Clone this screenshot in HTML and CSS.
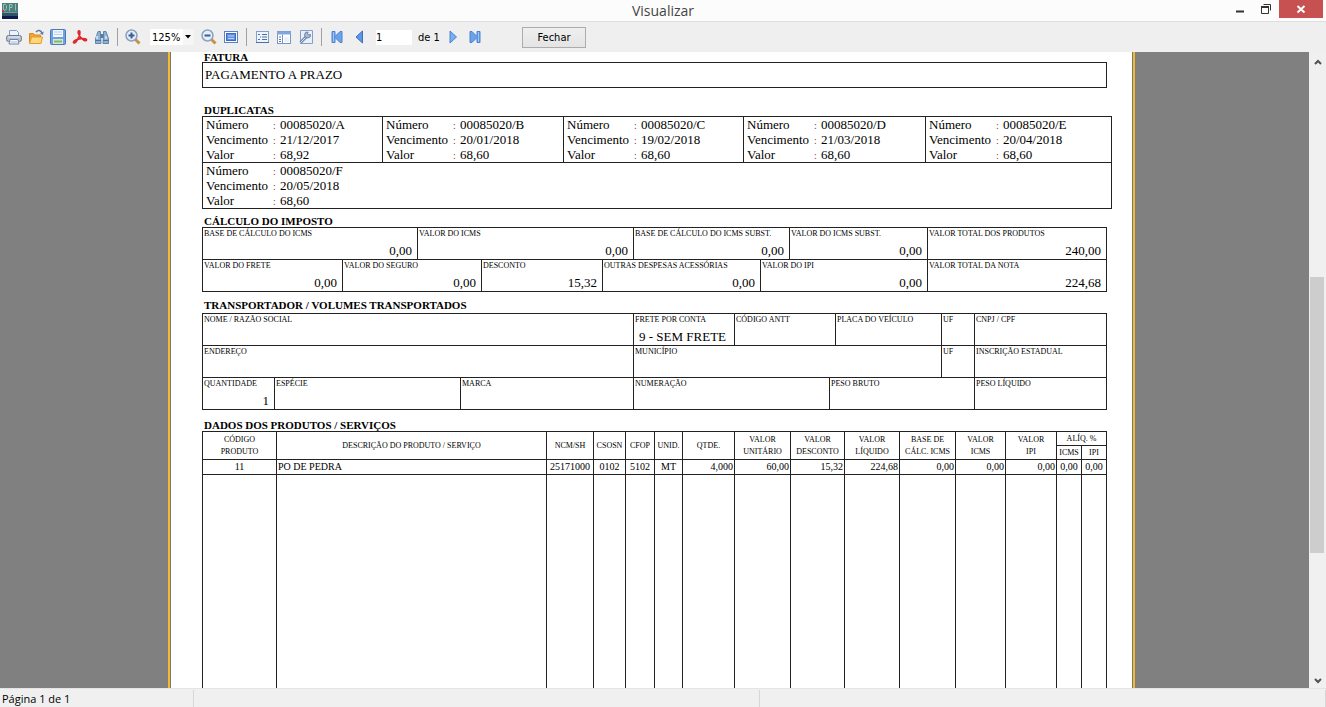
FILE: index.html
```html
<!DOCTYPE html>
<html lang="pt-BR">
<head>
    <meta charset="UTF-8">
    <meta name="viewport" content="width=device-width, initial-scale=1.0">
    <title>Visualizar</title>
    <link rel="stylesheet" href="styles.css">
</head>
<body>
    <header class="titlebar">
        <svg class="app-icon" width="16" height="16" viewBox="0 0 16 16">
            <rect width="16" height="16" fill="#4e7f7c"/>
            <rect y="10" width="16" height="3" fill="#2f5468"/>
            <rect y="13" width="16" height="3" fill="#0d1c4a"/>
            <path d="M1.500 7.500v-6h2l1 1v3l-1 1.500zM7.500 8V1.500h2.500v3H7.500M13.500 1v6.500" fill="none" stroke="#8fc4b4"/>
            <rect y="7" width="2" height="2" fill="#d0304a"/>
            <path d="M2 9.500h13" stroke="#7798a4"/>
        </svg>
        <h1>Visualizar</h1>
        <div class="window-buttons">
            <button class="win" aria-label="Minimizar"><svg width="12" height="12" viewBox="0 0 12 12"><path d="M2 8.500h8" stroke="#333" stroke-width="2"/></svg></button>
            <button class="win" aria-label="Restaurar"><svg width="12" height="12" viewBox="0 0 12 12"><path d="M1.500 4h7v6.500h-7z" fill="none" stroke="#333"/><path d="M1 4h8" stroke="#333" stroke-width="2"/><path d="M3.500 1.500h7v6" fill="none" stroke="#333"/></svg></button>
            <button class="win close" aria-label="Fechar janela"><svg width="10" height="10" viewBox="0 0 10 10"><path d="M1.500 2l7 6.500M8.500 2l-7 6.500" stroke="#fff" stroke-width="2"/></svg></button>
        </div>
    </header>

    <div class="toolbar">
        <button class="tool" aria-label="Imprimir">
            <svg viewBox="0 0 16 16"><path d="M3.500 7V1.500h7l2 2V7z" fill="#eaf3ff" stroke="#7e9cc4"/><rect x=".5" y="6.500" width="15" height="6" rx="2" fill="#b8c0cc" stroke="#6f7a8c"/><path d="M2 8h12" stroke="#eef1f5"/><path d="M4 10.500h8l1 4.500H3z" fill="#f4f8ff" stroke="#6e88ad"/><path d="M4.500 13h7" stroke="#9cc0ea"/></svg>
        </button>
        <button class="tool" aria-label="Abrir">
            <svg viewBox="0 0 16 16"><path d="M1.500 14V4.500h4l1 1.500h6v8z" fill="#eda63a" stroke="#d98a24"/><path d="M1.500 14.500l2-6.500h11l-1.500 6.500z" fill="#ffd77a" stroke="#e39a2e"/><path d="M8 3c2-2.500 5-2 6 1" fill="none" stroke="#5a7ca8" stroke-width="1.500"/><path d="M15.700 2.500l-.7 3.500-3-1.500z" fill="#5a7ca8"/></svg>
        </button>
        <button class="tool" aria-label="Salvar">
            <svg viewBox="0 0 16 16"><rect x=".5" y=".5" width="15" height="15" rx="1" fill="#6fa2e2" stroke="#4a78bd"/><rect x="3" y="1" width="10" height="7" fill="#f3f8ff"/><path d="M4 3h8M4 5.500h8" stroke="#b7cde9"/><rect x="3" y="10" width="10" height="5" fill="#d7e7cf"/><path d="M4 12.500h8" stroke="#82ba6c" stroke-width="2"/></svg>
        </button>
        <button class="tool" aria-label="Exportar PDF">
            <svg viewBox="0 0 16 16"><path d="M6.500 2C8.500 1 8 5 7 7.500 5.500 11 3 15 1.700 13.700.5 12 5 10 9 9.700c3-.2 6 .3 5.500 1.500-.7 1.500-4-.5-6-3C7 6 5.500 3 6.500 2z" fill="none" stroke="#e0262b" stroke-width="1.700"/></svg>
        </button>
        <button class="tool" aria-label="Localizar">
            <svg viewBox="0 0 16 16"><path d="M4 2.500h2.500V6l.5 8.500H1.500V10zM9.500 2.500H12l2.500 7.500v4.500H9L9.500 6z" fill="#8eb2d5" stroke="#6485a8"/><path d="M6.500 5h3v4h-3z" fill="#567da8"/><path d="M3 7v3M12 7v3" stroke="#dcecff" stroke-width="1.500"/><path d="M1.500 11.500H7M9 11.500h5.500" stroke="#4f7396"/></svg>
        </button>
        <span class="sep"></span>
        <button class="tool" aria-label="Aumentar zoom">
            <svg viewBox="0 0 16 16"><path d="M10 10l4.500 4.500" stroke="#c99242" stroke-width="3"/><circle cx="6.500" cy="6.500" r="5.500" fill="#e4effb" stroke="#8ba1bd" stroke-width="1.500"/><path d="M3.500 6.500h6M6.500 3.500v6" stroke="#385d94" stroke-width="2"/></svg>
        </button>
        <div class="zoom">
            <select aria-label="Zoom"><option>125%</option></select>
            <svg width="6" height="4" viewBox="0 0 6 4"><path d="M0 0h6L3 3.500z"/></svg>
        </div>
        <button class="tool" aria-label="Diminuir zoom">
            <svg viewBox="0 0 16 16"><path d="M10 10l4.500 4.500" stroke="#c99242" stroke-width="3"/><circle cx="6.500" cy="6.500" r="5.500" fill="#e4effb" stroke="#8ba1bd" stroke-width="1.500"/><path d="M3.500 6.500h6" stroke="#385d94" stroke-width="2"/></svg>
        </button>
        <button class="tool" aria-label="Tela cheia">
            <svg viewBox="0 0 16 16"><rect x="1.500" y="2.500" width="13" height="11" fill="#fff" stroke="#5b80c4"/><rect x="3.500" y="4.500" width="9" height="7" fill="#6390e4" stroke="#3b68c0"/><path d="M5 7h6M5 9.500h6" stroke="#b9d1ff"/></svg>
        </button>
        <span class="sep"></span>
        <button class="tool" aria-label="Estrutura">
            <svg viewBox="0 0 16 16"><rect x="2.500" y="2.500" width="12" height="11" fill="#eef5ff" stroke="#7f9fce"/><path d="M2 13.500h13" stroke="#4b6ea8"/><path d="M4 5.500h2M8 5.500h5M6 8h1M8 8h5M4 10.500h2M8 10.500h5" stroke="#4f6f9f"/></svg>
        </button>
        <button class="tool" aria-label="Miniaturas">
            <svg viewBox="0 0 16 16"><rect x="1.500" y="2.500" width="13" height="12" fill="#fff" stroke="#7797c7"/><path d="M1 4h14" stroke="#80a6df" stroke-width="3"/><path d="M6.500 5.500v9" stroke="#7797c7"/><path d="M3 8h2M3 10.500h2M3 12.500h2" stroke="#5577a8"/><path d="M8 8h5v5H8z" fill="#edf2fa"/></svg>
        </button>
        <button class="tool" aria-label="Configurar página">
            <svg viewBox="0 0 16 16"><path d="M2.500 1.500h12v13h-12z" fill="#e5effd" stroke="#879fc5"/><path d="M2.500 13.500l6-6" stroke="#7488a7" stroke-width="3"/><path d="M2.500 13.500l6-6" stroke="#d8e0ea"/><path d="M12.500 5.500a3 3 0 1 1-2.500-2.500L9.500 5l1 1z" fill="#a9b9cf" stroke="#6f84a6"/></svg>
        </button>
        <span class="sep"></span>
        <button class="tool" aria-label="Primeira página">
            <svg viewBox="0 0 16 16"><path d="M3 2.500h3v5l5-5h2v11h-2l-5-5v5H3z" fill="#6ba3ea" stroke="#4a82d2"/><path d="M4.500 3v10" stroke="#9cc5f6"/></svg>
        </button>
        <button class="tool" aria-label="Página anterior">
            <svg viewBox="0 0 16 16"><path d="M11.500 2v12L5 8z" fill="#5b97e6" stroke="#3a71c6"/></svg>
        </button>
        <input class="page-number" type="text" value="1" aria-label="Página">
        <span class="page-total">de 1</span>
        <button class="tool" aria-label="Próxima página">
            <svg viewBox="0 0 16 16"><path d="M5 2v12l6.500-6z" fill="#79aeee" stroke="#4a82d2"/></svg>
        </button>
        <button class="tool" aria-label="Última página">
            <svg viewBox="0 0 16 16"><path d="M13 2.500h-3v5l-5-5H3v11h2l5-5v5h3z" fill="#6ba3ea" stroke="#4a82d2"/><path d="M11.500 3v10" stroke="#9cc5f6"/></svg>
        </button>
        <button class="btn-close">Fechar</button>
    </div>

    <main class="viewer">
        <div class="canvas">
            <article class="sheet">
                <section class="block">
                    <h2>FATURA</h2>
                    <p class="fatura">PAGAMENTO A PRAZO</p>
                </section>

                <section class="block duplicatas">
                    <h2>DUPLICATAS</h2>
                    <div class="dup-grid">
                        <dl class="dup"><dt>Número</dt><dd>00085020/A</dd><dt>Vencimento</dt><dd>21/12/2017</dd><dt>Valor</dt><dd>68,92</dd></dl>
                        <dl class="dup"><dt>Número</dt><dd>00085020/B</dd><dt>Vencimento</dt><dd>20/01/2018</dd><dt>Valor</dt><dd>68,60</dd></dl>
                        <dl class="dup"><dt>Número</dt><dd>00085020/C</dd><dt>Vencimento</dt><dd>19/02/2018</dd><dt>Valor</dt><dd>68,60</dd></dl>
                        <dl class="dup"><dt>Número</dt><dd>00085020/D</dd><dt>Vencimento</dt><dd>21/03/2018</dd><dt>Valor</dt><dd>68,60</dd></dl>
                        <dl class="dup"><dt>Número</dt><dd>00085020/E</dd><dt>Vencimento</dt><dd>20/04/2018</dd><dt>Valor</dt><dd>68,60</dd></dl>
                        <dl class="dup last"><dt>Número</dt><dd>00085020/F</dd><dt>Vencimento</dt><dd>20/05/2018</dd><dt>Valor</dt><dd>68,60</dd></dl>
                    </div>
                </section>

                <section class="block imposto">
                    <h2>CÁLCULO DO IMPOSTO</h2>
                    <div class="fields">
                        <div class="row imposto-1">
                            <div class="field"><span>BASE DE CÁLCULO DO ICMS</span><b>0,00</b></div>
                            <div class="field"><span>VALOR DO ICMS</span><b>0,00</b></div>
                            <div class="field"><span>BASE DE CÁLCULO DO ICMS SUBST.</span><b>0,00</b></div>
                            <div class="field"><span>VALOR DO ICMS SUBST.</span><b>0,00</b></div>
                            <div class="field"><span>VALOR TOTAL DOS PRODUTOS</span><b>240,00</b></div>
                        </div>
                        <div class="row imposto-2">
                            <div class="field"><span>VALOR DO FRETE</span><b>0,00</b></div>
                            <div class="field"><span>VALOR DO SEGURO</span><b>0,00</b></div>
                            <div class="field"><span>DESCONTO</span><b>15,32</b></div>
                            <div class="field"><span>OUTRAS DESPESAS ACESSÓRIAS</span><b>0,00</b></div>
                            <div class="field"><span>VALOR DO IPI</span><b>0,00</b></div>
                            <div class="field"><span>VALOR TOTAL DA NOTA</span><b>224,68</b></div>
                        </div>
                    </div>
                </section>

                <section class="block transporte">
                    <h2>TRANSPORTADOR / VOLUMES TRANSPORTADOS</h2>
                    <div class="fields">
                        <div class="row transp-1">
                            <div class="field"><span>NOME / RAZÃO SOCIAL</span></div>
                            <div class="field"><span>FRETE POR CONTA</span><b class="frete">9 - SEM FRETE</b></div>
                            <div class="field"><span>CÓDIGO ANTT</span></div>
                            <div class="field"><span>PLACA DO VEÍCULO</span></div>
                            <div class="field"><span>UF</span></div>
                            <div class="field"><span>CNPJ / CPF</span></div>
                        </div>
                        <div class="row transp-2">
                            <div class="field"><span>ENDEREÇO</span></div>
                            <div class="field"><span>MUNICÍPIO</span></div>
                            <div class="field"><span>UF</span></div>
                            <div class="field"><span>INSCRIÇÃO ESTADUAL</span></div>
                        </div>
                        <div class="row transp-3">
                            <div class="field"><span>QUANTIDADE</span><b>1</b></div>
                            <div class="field"><span>ESPÉCIE</span></div>
                            <div class="field"><span>MARCA</span></div>
                            <div class="field"><span>NUMERAÇÃO</span></div>
                            <div class="field"><span>PESO BRUTO</span></div>
                            <div class="field"><span>PESO LÍQUIDO</span></div>
                        </div>
                    </div>
                </section>

                <section class="block">
                    <h2>DADOS DOS PRODUTOS / SERVIÇOS</h2>
                    <table class="produtos">
                        <colgroup>
                            <col class="c-codigo"><col><col class="c-ncm"><col class="c-csosn"><col class="c-cfop"><col class="c-unid"><col class="c-qtde">
                            <col class="c-unit"><col class="c-desc"><col class="c-liq"><col class="c-base"><col class="c-icms"><col class="c-ipi"><col class="c-aliq"><col class="c-aliq">
                        </colgroup>
                        <thead>
                            <tr>
                                <th rowspan="2">CÓDIGO<br>PRODUTO</th>
                                <th rowspan="2">DESCRIÇÃO DO PRODUTO / SERVIÇO</th>
                                <th rowspan="2">NCM/SH</th>
                                <th rowspan="2">CSOSN</th>
                                <th rowspan="2">CFOP</th>
                                <th rowspan="2">UNID.</th>
                                <th rowspan="2">QTDE.</th>
                                <th rowspan="2">VALOR<br>UNITÁRIO</th>
                                <th rowspan="2">VALOR<br>DESCONTO</th>
                                <th rowspan="2">VALOR<br>LÍQUIDO</th>
                                <th rowspan="2">BASE DE<br>CÁLC. ICMS</th>
                                <th rowspan="2">VALOR<br>ICMS</th>
                                <th rowspan="2">VALOR<br>IPI</th>
                                <th colspan="2">ALÍQ. %</th>
                            </tr>
                            <tr>
                                <th>ICMS</th>
                                <th>IPI</th>
                            </tr>
                        </thead>
                        <tbody>
                            <tr>
                                <td>11</td>
                                <td class="left">PO DE PEDRA</td>
                                <td>25171000</td>
                                <td>0102</td>
                                <td>5102</td>
                                <td>MT</td>
                                <td class="num">4,000</td>
                                <td class="num">60,00</td>
                                <td class="num">15,32</td>
                                <td class="num">224,68</td>
                                <td class="num">0,00</td>
                                <td class="num">0,00</td>
                                <td class="num">0,00</td>
                                <td>0,00</td>
                                <td>0,00</td>
                            </tr>
                            <tr class="blank">
                                <td></td><td></td><td></td><td></td><td></td><td></td><td></td><td></td><td></td><td></td><td></td><td></td><td></td><td></td><td></td>
                            </tr>
                        </tbody>
                    </table>
                </section>
            </article>
        </div>
        <div class="scrollbar">
            <button aria-label="Rolar para cima"><svg width="8" height="6" viewBox="0 0 8 6"><path d="M1 5l3-3 3 3" fill="none" stroke="#505050" stroke-width="2"/></svg></button>
            <div class="track"><div class="thumb"></div></div>
            <button aria-label="Rolar para baixo"><svg width="8" height="6" viewBox="0 0 8 6"><path d="M1 1l3 3 3-3" fill="none" stroke="#505050" stroke-width="2"/></svg></button>
        </div>
    </main>

    <footer class="statusbar">
        <span>Página 1 de 1</span>
        <span></span>
        <span></span>
    </footer>
</body>
</html>
```

FILE: styles.css
```css
* { box-sizing: border-box; }
body { margin: 0; height: 100vh; display: flex; flex-direction: column; overflow: hidden; background: #efefef; color: #000; font-family: "Open Sans", "Noto Sans", sans-serif; font-size: 12px; }
h1, h2, p, dl, dd { margin: 0; }
button { margin: 0; padding: 0; border: 0; background: none; font: inherit; color: inherit; }

/* window title */
.titlebar { flex: none; height: 22px; display: grid; grid-template-columns: 1fr auto 1fr; align-items: center; background: #fcfcfc; border-bottom: 1px solid #dedede; }
.titlebar h1 { font-size: 14px; line-height: 20px; font-weight: normal; color: #444; }
.app-icon { margin-left: 2px; }
.window-buttons { justify-self: end; align-self: start; display: flex; padding-right: 3px; }
.win { width: 26px; height: 18px; display: flex; align-items: center; justify-content: center; }
.close { width: 44px; background: #c75050; }

/* toolbar */
.toolbar { flex: none; height: 30px; display: flex; align-items: center; padding-left: 3px; background: #efefef; font-family: "DejaVu Sans Condensed", "DejaVu Sans", sans-serif; font-size: 11px; }
.tool { width: 22px; height: 22px; display: flex; align-items: center; justify-content: center; }
.tool svg { width: 16px; height: 16px; }
.sep { width: 1px; height: 18px; margin: 0 4px; background: #a0a0a0; }
.zoom { position: relative; width: 44px; margin: 0 4px 0 6px; }
.zoom select { width: 100%; height: 16px; padding: 0 2px; border: 0; border-radius: 0; background: linear-gradient(to left, #f5f5f5 11px, #fff 11px); appearance: none; font: inherit; color: #000; display: block; }
.zoom svg { position: absolute; right: 3px; top: 6px; pointer-events: none; }
.page-number { width: 36px; height: 15px; margin: 0 6px; padding: 0; border: 0; background: #fff; font: inherit; }
.page-total { width: 24px; }
.btn-close { width: 64px; height: 21px; margin-left: 36px; border: 1px solid #acacac; background: linear-gradient(#efefef, #e4e4e4); }

/* preview area */
.viewer { flex: 1; min-height: 0; display: flex; }
.canvas { flex: 1; min-width: 0; padding-right: 6px; background: #808080; overflow: hidden; }
.sheet { width: 100%; max-width: 967px; margin: 0 auto; padding: 0 21px 0 32px; border: solid #f5b92e; border-width: 0 2px; background: #fff; box-shadow: inset 1px 0 #777, inset -1px 0 #777; font-family: "Liberation Serif", "Times New Roman", serif; font-size: 13px; }

.block { margin-right: 5px; }
.block h2 { padding-left: 2px; font-size: 11px; line-height: 12px; white-space: nowrap; }
.block:first-child h2 { line-height: 10px; }
.fatura { padding-left: 2px; border: 1px solid #222; line-height: 24px; }

.duplicatas { margin: 16px 0 6px; }
.dup-grid { display: grid; grid-template-columns: 180fr 181fr 180fr 182fr 186fr; border: solid #222; border-width: 1px 0 0 1px; }
.dup { display: grid; grid-template-columns: 67px 1fr; padding-left: 3px; border: solid #222; border-width: 0 1px 1px 0; line-height: 15px; }
.dup dd::before { content: ":"; display: inline-block; width: 7px; color: #8a3a3a; font-size: 10px; line-height: 10px; }
.dup.last { grid-column: 1 / -1; }

.fields { border: solid #222; border-width: 1px 0 0 1px; }
.row { display: grid; height: 32px; }
.imposto-1 { grid-template-columns: 215fr 216fr 156fr 138fr 179fr; }
.imposto-2 { grid-template-columns: 140fr 139fr 121fr 158fr 167fr 179fr; }
.transp-1 { grid-template-columns: 431fr 101fr 101fr 106fr 33fr 132fr; }
.transp-2 { grid-template-columns: 431fr 308fr 33fr 132fr; }
.transp-3 { grid-template-columns: 72fr 186fr 173fr 196fr 145fr 132fr; }
.field { min-width: 0; display: flex; flex-direction: column; justify-content: space-between; border: solid #222; border-width: 0 1px 1px 0; white-space: nowrap; }
.field span { padding-left: 1px; font-size: 8px; line-height: 12px; }
.field b { padding: 0 5px; font-weight: normal; line-height: 16px; text-align: right; }
.field .frete { text-align: left; }
.imposto { margin-bottom: 7px; }
.transporte { margin-bottom: 9px; }
.transporte h2 { margin-bottom: 2px; }

/* product list */
.produtos { width: 100%; table-layout: fixed; border-collapse: separate; border-spacing: 0; border: solid #222; border-width: 1px 1px 0 0; font-size: 10px; }
.produtos th, .produtos td { padding: 0; border: solid #222; border-width: 0 0 1px 1px; text-align: center; white-space: nowrap; }
.produtos th { height: 14px; font-size: 8px; line-height: 12px; font-weight: normal; }
.produtos td { height: 15px; line-height: 14px; }
.produtos .left { text-align: left; padding-left: 1px; }
.produtos .num { text-align: right; padding-right: 1px; }
.produtos .blank td { height: 600px; }
.c-codigo { width: 74px; }
.c-ncm { width: 47px; }
.c-csosn { width: 32px; }
.c-cfop { width: 29px; }
.c-unid { width: 28px; }
.c-qtde { width: 52px; }
.c-unit, .c-base { width: 56px; }
.c-desc { width: 54px; }
.c-liq { width: 55px; }
.c-icms { width: 50px; }
.c-ipi { width: 51px; }
.c-aliq { width: 25px; }

.scrollbar { flex: none; width: 17px; display: flex; flex-direction: column; background: #f0f0f0; }
.scrollbar button { flex: none; height: 17px; }
.track { flex: 1; display: grid; grid-template-rows: 208fr 276fr 118fr; }
.thumb { grid-row: 2; margin: 0 2px 0 1px; background: #cdcdcd; }

.statusbar { flex: none; height: 19px; display: grid; grid-template-columns: 194px 566px 1fr; padding-top: 1px; border-top: 1px solid #e4e4e4; background: #f0f0f0; line-height: 17px; font-size: 11px; }
.statusbar span { padding-left: 2px; border-right: 1px solid #d7d7d7; }
```
